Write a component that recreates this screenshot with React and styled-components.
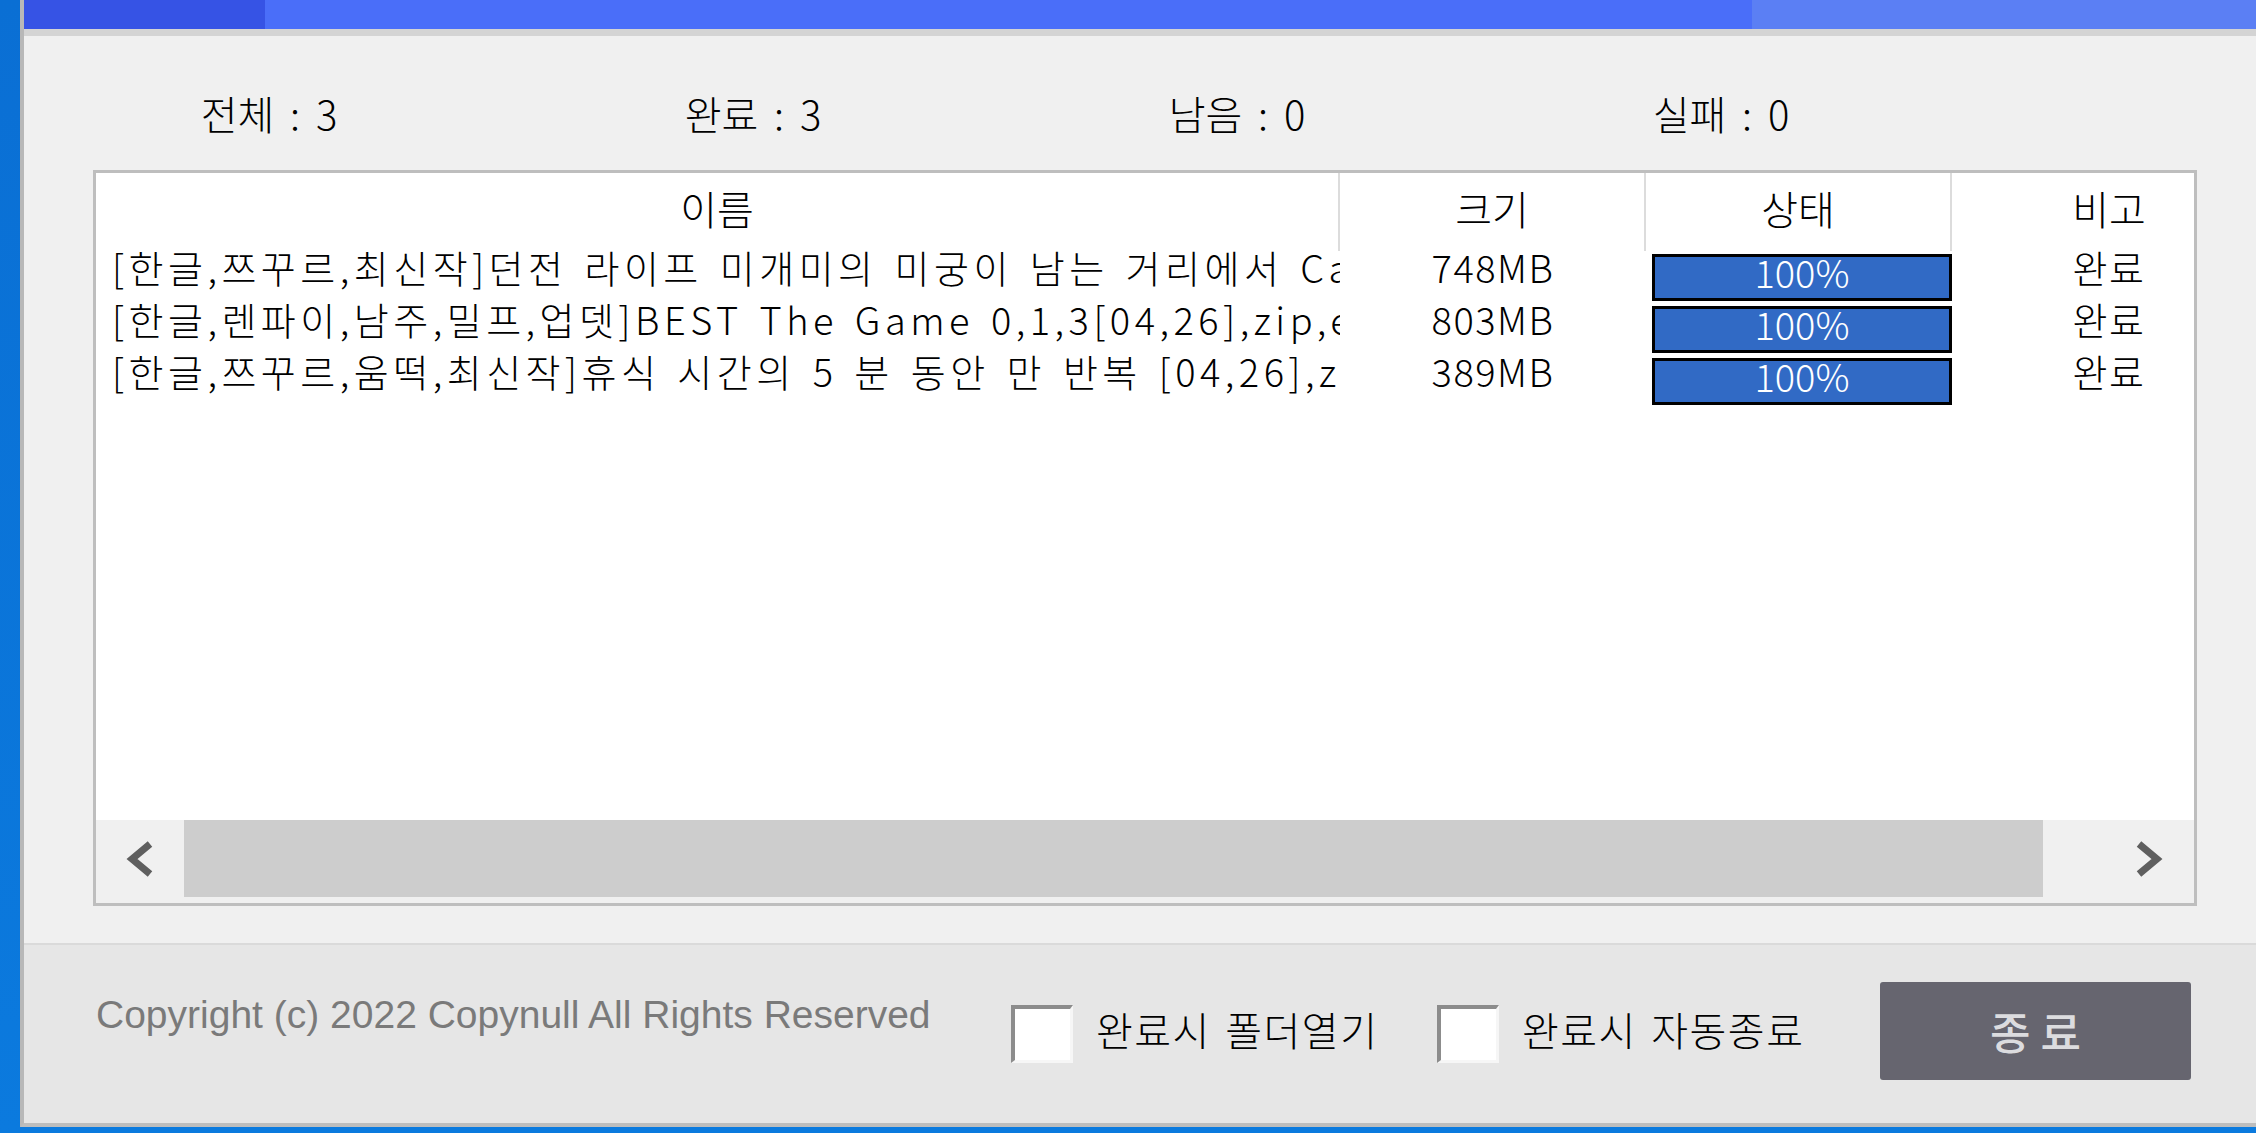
import React from 'react'
import styled, { createGlobalStyle } from 'styled-components'

const GlobalStyle = createGlobalStyle`
  html, body {
    margin: 0;
    padding: 0;
    background: #0b76d8;
  }
  * { box-sizing: border-box; }
`

const KR = `"Noto Sans CJK KR", "Noto Sans", sans-serif`

const files = [
  {
    name: '[한글,쯔꾸르,최신작]던전 라이프 미개미의 미궁이 남는 거리에서 Cafe [04,26],zip,egg',
    size: '748MB',
    progress: 100,
    note: '완료',
  },
  {
    name: '[한글,렌파이,남주,밀프,업뎃]BEST The Game 0,1,3[04,26],zip,egg',
    size: '803MB',
    progress: 100,
    note: '완료',
  },
  {
    name: '[한글,쯔꾸르,움떡,최신작]휴식 시간의 5 분 동안 만 반복 [04,26],zip,egg',
    size: '389MB',
    progress: 100,
    note: '완료',
  },
]

const stats = [
  ['전체', 3],
  ['완료', 3],
  ['남음', 0],
  ['실패', 0],
]

function Chevron({ dir }) {
  const pts = dir === 'left' ? '25,3 7,18 25,33' : '5,3 23,18 5,33'
  return (
    <svg width="30" height="36" viewBox="0 0 30 36">
      <polyline points={pts} fill="none" stroke="#5f5f5f" strokeWidth="7" />
    </svg>
  )
}

function App() {
  return (
    <Desktop>
      <GlobalStyle />
      <Window>
        <TopBar>
          <BarSeg tone="#3653e5" w="241px" />
          <BarSeg tone="#4a6ef9" w="1487px" />
          <BarSeg tone="#5b7ff4" />
        </TopBar>
        <BarShade />

        <Main>
          <Stats>
            {stats.map(([label, n]) => (
              <Stat key={label}>{label} : {n}</Stat>
            ))}
          </Stats>

          <ListBox>
            <Grid header>
              <HeadCell>이름</HeadCell>
              <HeadCell>크기</HeadCell>
              <HeadCell>상태</HeadCell>
              <HeadCell last>비고</HeadCell>
            </Grid>

            <Body>
              {files.map((f) => (
                <Grid key={f.name}>
                  <NameCell>{f.name}</NameCell>
                  <TextCell>{f.size}</TextCell>
                  <div>
                    <Progress>
                      <Fill style={{ width: f.progress + '%' }} />
                      <Pct>{f.progress}%</Pct>
                    </Progress>
                  </div>
                  <TextCell>{f.note}</TextCell>
                </Grid>
              ))}
            </Body>

            <HScroll>
              <ScrollBtn w="88px"><Chevron dir="left" /></ScrollBtn>
              <Thumb />
              <Track />
              <ScrollBtn w="91px"><Chevron dir="right" /></ScrollBtn>
            </HScroll>
          </ListBox>
        </Main>

        <Footer>
          <Copyright>Copyright (c) 2022 Copynull All Rights Reserved</Copyright>
          <CheckOption>
            <CheckBox />
            <CheckText>완료시 폴더열기</CheckText>
          </CheckOption>
          <CheckOption>
            <CheckBox />
            <CheckText>완료시 자동종료</CheckText>
          </CheckOption>
          <CloseButton>종료</CloseButton>
        </Footer>
      </Window>
    </Desktop>
  )
}

export default App

const Desktop = styled.div`
  width: 2256px;
  height: 1133px;
  display: flex;
  padding: 0 0 6px 20px;
  background: linear-gradient(180deg, #0a6fd4 0%, #0b7ade 100%);
  overflow: hidden;
`

const Window = styled.div`
  flex: 1;
  min-width: 0;
  display: flex;
  flex-direction: column;
  background: #f0f0f0;
  border-left: 4px solid #b8b8b8;
  border-bottom: 4px solid #bdbdbd;
  font-family: ${KR};
  color: #000;
  overflow: hidden;
`

const TopBar = styled.div`
  height: 29px;
  display: flex;
`

const BarSeg = styled.div`
  background: ${(p) => p.tone};
  flex: ${(p) => (p.w ? `0 0 ${p.w}` : '1')};
`

const BarShade = styled.div`
  height: 7px;
  background: #d4d4d4;
`

const Main = styled.div`
  flex: 1;
  min-width: 0;
  display: flex;
  flex-direction: column;
  padding: 57px 59px 37px 69px;
`

const Stats = styled.div`
  display: grid;
  grid-template-columns: repeat(4, 484px);
  margin-left: -66px;
  height: 40px;
`

const Stat = styled.div`
  text-align: center;
  font-size: 40px;
  line-height: 40px;
  font-weight: 300;
  word-spacing: 7px;
`

const ListBox = styled.div`
  margin-top: 37px;
  height: 736px;
  min-width: 0;
  display: flex;
  flex-direction: column;
  background: #fff;
  border: 3px solid #bebebe;
  overflow: hidden;
`

const Grid = styled.div`
  display: grid;
  grid-template-columns: 1244px 306px 306px 314px;
  height: ${(p) => (p.header ? '78px' : '52px')};
  flex: none;
`

const HeadCell = styled.div`
  display: flex;
  align-items: center;
  justify-content: center;
  padding-bottom: 8px;
  font-size: 40px;
  font-weight: 300;
  border-right: ${(p) => (p.last ? 'none' : '2px solid #dcdcdc')};
`

const Body = styled.div`
  flex: 1;
`

const NameCell = styled.div`
  padding: 2px 0 0 16px;
  font-size: 38px;
  line-height: 28px;
  font-weight: 300;
  letter-spacing: 4.5px;
  word-spacing: 4px;
  white-space: nowrap;
  overflow: hidden;
`

const TextCell = styled.div`
  padding-top: 2px;
  text-align: center;
  font-size: 38px;
  line-height: 28px;
  font-weight: 300;
  letter-spacing: 1.5px;
  white-space: nowrap;
`

const Progress = styled.div`
  position: relative;
  margin: 3px 0 0 6px;
  width: 300px;
  height: 47px;
  border: 3px solid #000;
  background: #fff;
`

const Fill = styled.div`
  height: 100%;
  background: #316ac5;
`

const Pct = styled.div`
  position: absolute;
  inset: 0;
  text-align: center;
  color: #fff;
  font-size: 38px;
  line-height: 30px;
  font-weight: 300;
`

const HScroll = styled.div`
  height: 83px;
  flex: none;
  display: flex;
  background: #f0f0f0;
`

const ScrollBtn = styled.div`
  flex: 0 0 ${(p) => p.w};
  height: 77px;
  display: flex;
  align-items: center;
  justify-content: center;
`

const Thumb = styled.div`
  flex: 0 0 1859px;
  height: 77px;
  background: #cdcdcd;
`

const Track = styled.div`
  flex: 1;
`

const Footer = styled.div`
  height: 180px;
  display: flex;
  align-items: center;
  padding: 0 65px 0 72px;
  background: #e6e6e6;
  border-top: 2px solid #dadada;
`

const Copyright = styled.div`
  flex: 0 0 915px;
  align-self: flex-start;
  margin-top: 50px;
  font-family: "Liberation Sans", Arial, sans-serif;
  font-size: 39px;
  line-height: 39px;
  color: #7a7a7a;
  white-space: nowrap;
`

const CheckOption = styled.label`
  flex: 0 0 426px;
  display: flex;
  align-items: center;
  gap: 23px;
  font-size: 40px;
  font-weight: 300;
  white-space: nowrap;
`

const CheckText = styled.span`
  padding-bottom: 10px;
  letter-spacing: 1.5px;
  word-spacing: 4px;
`

const CheckBox = styled.span`
  width: 62px;
  height: 58px;
  flex: none;
  background: #fff;
  border-top: 4px solid #8c8c8c;
  border-left: 4px solid #8c8c8c;
  border-right: 3px solid #f6f6f6;
  border-bottom: 3px solid #f6f6f6;
`

const CloseButton = styled.button`
  margin-left: auto;
  margin-top: -6px;
  flex: none;
  width: 311px;
  height: 98px;
  border: none;
  border-radius: 3px;
  background: #66656f;
  color: #dcdcdf;
  font-family: ${KR};
  font-size: 44px;
  font-weight: 500;
  letter-spacing: 10px;
  padding: 0 0 0 10px;
`
